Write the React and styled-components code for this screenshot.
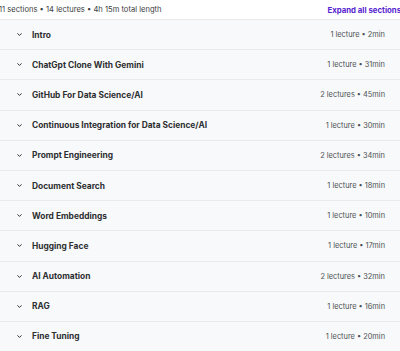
import React from "react";
import styled, { createGlobalStyle } from "styled-components";

const GlobalStyle = createGlobalStyle`
  body {
    margin: 0;
    background: #fff;
    font-family: Inter, "Noto Sans", sans-serif;
    color: #2d2f31;
  }
`;

const Wrapper = styled.div`
  width: 400px;
  overflow: hidden;
`;

const Header = styled.div`
  display: flex;
  align-items: center;
  justify-content: space-between;
  height: 19px;
`;

const Summary = styled.span`
  font-size: 7.6px;
  color: #3a3d40;
  margin-left: -1px;
  white-space: nowrap;
`;

const ExpandLink = styled.span`
  font-size: 7.8px;
  font-weight: 700;
  color: #5624d0;
  white-space: nowrap;
  margin-right: -1px;
`;

const List = styled.div`
  display: flex;
  flex-direction: column;
`;

const Row = styled.div`
  display: flex;
  align-items: center;
  box-sizing: border-box;
  height: 30.2px;
  border-top: 1px solid #e9eaec;
  background: #f8f9fa;
  padding: 0 15px 0 16px;
`;

const Chevron = styled.svg`
  width: 7px;
  height: 7px;
  flex-shrink: 0;
  margin-right: 9px;
`;

const Title = styled.span`
  flex: 1;
  font-size: 8.4px;
  font-weight: 700;
  color: #2d2f31;
  white-space: nowrap;
`;

const Meta = styled.span`
  font-size: 7.4px;
  color: #4d5255;
  white-space: nowrap;
`;

const sections = [
  { title: "Intro", meta: "1 lecture • 2min" },
  { title: "ChatGpt Clone With Gemini", meta: "1 lecture • 31min" },
  { title: "GitHub For Data Science/AI", meta: "2 lectures • 45min" },
  { title: "Continuous Integration for Data Science/AI", meta: "1 lecture • 30min" },
  { title: "Prompt Engineering", meta: "2 lectures • 34min" },
  { title: "Document Search", meta: "1 lecture • 18min" },
  { title: "Word Embeddings", meta: "1 lecture • 10min" },
  { title: "Hugging Face", meta: "1 lecture • 17min" },
  { title: "AI Automation", meta: "2 lectures • 32min" },
  { title: "RAG", meta: "1 lecture • 16min" },
  { title: "Fine Tuning", meta: "1 lecture • 20min" },
];

const App = () => {
  return (
    <Wrapper>
      <GlobalStyle />
      <Header>
        <Summary>11 sections • 14 lectures • 4h 15m total length</Summary>
        <ExpandLink>Expand all sections</ExpandLink>
      </Header>
      <List>
        {sections.map((item) => (
          <Row key={item.title}>
            <Chevron viewBox="0 0 10 10">
              <path d="M2.5 3.8 L5 6.3 L7.5 3.8" fill="none" stroke="#2d2f31" strokeWidth="1.4" strokeLinecap="round" strokeLinejoin="round" />
            </Chevron>
            <Title>{item.title}</Title>
            <Meta>{item.meta}</Meta>
          </Row>
        ))}
      </List>
    </Wrapper>
  );
};

export default App;
